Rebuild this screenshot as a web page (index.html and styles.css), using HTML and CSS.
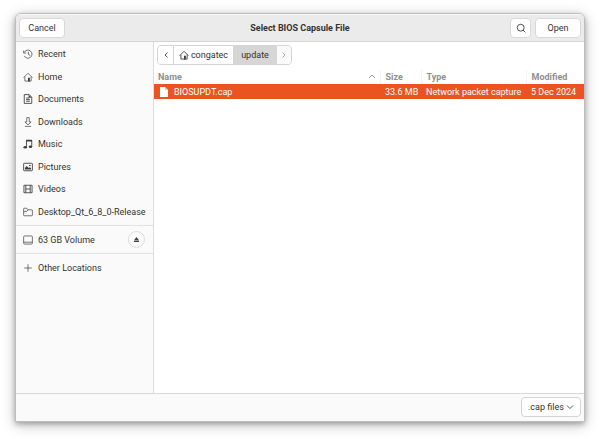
FILE: index.html
```html
<!DOCTYPE html>
<html lang="en">
<head>
    <meta charset="utf-8">
    <title>Select BIOS Capsule File</title>
    <link rel="stylesheet" href="styles.css">
</head>
<body>
    <main class="dialog">
        <header class="header">
            <button type="button" class="btn">Cancel</button>
            <h1>Select BIOS Capsule File</h1>
            <div class="actions">
                <button type="button" class="btn btn-search" aria-label="Search">
                    <svg class="icon" viewBox="0 0 16 16"><circle cx="7.500" cy="7.500" r="5.500"/><path d="M11 11l4 4"/></svg>
                </button>
                <button type="button" class="btn">Open</button>
            </div>
        </header>

        <div class="content">
            <nav class="sidebar" aria-label="Places">
                <ul class="places">
                    <li><a href="#">
                        <svg class="icon thin" viewBox="0 0 16 16"><path d="M2 5.500a6.500 6.500 0 1 1 0 5.500M1 2.500v4h4M8.500 4.500v4l3 2"/></svg>
                        Recent</a></li>
                    <li><a href="#">
                        <svg class="icon thin" viewBox="0 0 16 16"><path d="M1 9l7-7 7 7M3 7.500v7h10v-7"/><path class="solid" d="M8 9h3v6H8z"/></svg>
                        Home</a></li>
                    <li><a href="#">
                        <svg class="icon" viewBox="0 0 16 16"><path d="M2 1h8l4 4v10H2zM5 6.500h5M5 9h6M5 11.500h6"/><path class="solid" d="M9 1l5 5H9z"/></svg>
                        Documents</a></li>
                    <li><a href="#">
                        <svg class="icon thin" viewBox="0 0 16 16"><path d="M6 1h4v7h3l-5 4.500L3 8h3zM3 15h10"/></svg>
                        Downloads</a></li>
                    <li><a href="#">
                        <svg class="icon" viewBox="0 0 16 16"><path d="M5.500 13V2.500h8.500V12"/><path class="solid" d="M5 1h9.500v3H5z"/><ellipse class="solid" cx="3.500" cy="13" rx="2.800" ry="2"/><ellipse class="solid" cx="12" cy="12.500" rx="2.800" ry="2"/></svg>
                        Music</a></li>
                    <li><a href="#">
                        <svg class="icon" viewBox="0 0 16 16"><rect x="1" y="2" width="14" height="12" rx="1"/><path class="solid" d="M3 12V9.500l3-3 3 3 2-1 2 2V12z"/><circle class="solid" cx="11" cy="5.500" r="1.300"/></svg>
                        Pictures</a></li>
                    <li><a href="#">
                        <svg class="icon" viewBox="0 0 16 16"><path d="M1.500 2h13v12h-13zM4.500 2v12M11.500 2v12M4.500 8h7"/></svg>
                        Videos</a></li>
                    <li><a href="#">
                        <svg class="icon thin" viewBox="0 0 16 16"><path d="M1 13V3q0-1 1-1h4l2 2.500h6q1 0 1 1V13q0 1-1 1H2q-1 0-1-1zM1 7h5l2-2.500"/></svg>
                        Desktop_Qt_6_8_0-Release</a></li>
                </ul>
                <div class="volume">
                    <a href="#">
                        <svg class="icon thin" viewBox="0 0 16 16"><rect x="1" y="1.500" width="14" height="13" rx="1.500"/><path d="M1 11.500h14"/></svg>
                        63 GB Volume</a>
                    <button type="button" class="eject" aria-label="Eject">
                        <svg viewBox="0 0 8 8"><path d="M4 0l4 5H0zM0 6h8v2H0z"/></svg>
                    </button>
                </div>
                <a class="other" href="#">
                    <svg class="icon thin" viewBox="0 0 16 16"><path d="M8 2v12M2 8h12"/></svg>
                    Other Locations</a>
            </nav>

            <section class="files">
                <div class="pathbar">
                    <button type="button" class="arrow" aria-label="Back">
                        <svg class="chevron" viewBox="0 0 8 8"><path d="M5.500 1.500L3 4l2.500 2.500"/></svg>
                    </button>
                    <button type="button" class="crumb">
                        <svg class="icon" viewBox="0 0 16 16"><path d="M1 9l7-7 7 7M3 7.500v7h10v-7"/><path class="solid" d="M8 9h3v6H8z"/></svg>
                        congatec
                    </button>
                    <button type="button" class="crumb current">update</button>
                    <button type="button" class="arrow" aria-label="Forward" disabled>
                        <svg class="chevron" viewBox="0 0 8 8"><path d="M2.500 1.500L5 4 2.500 6.500"/></svg>
                    </button>
                </div>
                <table>
                    <thead>
                        <tr>
                            <th class="name"><div class="cell">Name
                                <svg class="chevron" viewBox="0 0 8 8"><path d="M1 5l3-3 3 3"/></svg></div></th>
                            <th class="size">Size</th>
                            <th class="type">Type</th>
                            <th class="modified">Modified</th>
                        </tr>
                    </thead>
                    <tbody>
                        <tr class="selected">
                            <td class="name"><div class="cell">
                                <svg class="file" viewBox="0 0 8 10"><path d="M0 0h5l3 3v7H0z"/><path class="fold" d="M5 0v3h3z"/></svg>
                                BIOSUPDT.cap</div></td>
                            <td class="size">33.6 MB</td>
                            <td>Network packet capture</td>
                            <td>5 Dec 2024</td>
                        </tr>
                    </tbody>
                </table>
            </section>
        </div>

        <footer class="footer">
            <div class="filter">
                <select aria-label="File type">
                    <option>.cap files</option>
                </select>
                <svg class="chevron" viewBox="0 0 8 8"><path d="M1 2.500l3 3 3-3"/></svg>
            </div>
        </footer>
    </main>
</body>
</html>
```
FILE: styles.css
```css
* { box-sizing: border-box; }
body {
    margin: 0;
    min-height: 100vh;
    padding: 13px 15px 17px;
    display: flex;
    background: #fff;
    color: #333;
    font: 9px/12px Roboto, "Noto Sans", sans-serif;
}
button, select { font: inherit; color: inherit; margin: 0; }
a { color: inherit; text-decoration: none; }

.dialog {
    flex: 1;
    min-width: 0;
    display: flex;
    flex-direction: column;
    overflow: hidden;
    background: #fff;
    border: 1px solid #bdbdbd;
    border-radius: 6px 6px 0 0;
    box-shadow: 0 2px 5px rgba(0, 0, 0, 0.25), 0 3px 14px rgba(0, 0, 0, 0.25);
}

.icon {
    width: 10px;
    height: 10px;
    flex: none;
    fill: none;
    stroke: #4a4a4a;
    stroke-width: 1.5;
}
.icon .solid { fill: #3d3d3d; stroke: none; }
.thin { stroke-width: 1.2; }
.chevron {
    width: 8px;
    height: 8px;
    flex: none;
    fill: none;
    stroke: #555;
}

/* title bar */
.header {
    display: grid;
    grid-template-columns: 1fr auto 1fr;
    align-items: center;
    height: 28px;
    padding: 0 3px;
    background: #ebebeb;
    border-top: 1px solid #fafafa;
    border-bottom: 1px solid #d5d5d5;
}
.header h1 { margin: 0; font-size: 9px; font-weight: 700; }
.btn {
    width: 46px;
    height: 20px;
    padding: 0;
    background: #fff;
    border: 1px solid #d8d8d8;
    border-radius: 4px;
}
.btn-search { display: grid; place-items: center; width: 21px; }
.actions { display: flex; justify-content: flex-end; gap: 4px; }

.content { flex: 1; display: flex; min-height: 0; }

/* places */
.sidebar {
    flex: none;
    width: 138px;
    padding-top: 1px;
    background: #fafafa;
    border-right: 1px solid #dcdcdc;
}
.places {
    display: grid;
    grid-auto-rows: 1fr;
    height: 180px;
    margin: 0 0 2px;
    padding: 0;
    list-style: none;
}
.sidebar a {
    display: flex;
    align-items: center;
    gap: 5px;
    height: 100%;
    padding-left: 7px;
    white-space: nowrap;
}
.volume {
    display: flex;
    align-items: center;
    justify-content: space-between;
    height: 29px;
    padding-right: 8px;
    border-top: 1px solid #e2e2e2;
    border-bottom: 1px solid #e2e2e2;
}
.eject {
    display: grid;
    place-items: center;
    width: 17px;
    height: 17px;
    padding: 0;
    background: #fafafa;
    border: 1px solid #ddd;
    border-radius: 50%;
}
.eject svg { width: 5px; height: 5px; fill: #444; }
.sidebar .other { height: 28px; }

/* file list */
.files { flex: 1; min-width: 0; }
.pathbar {
    display: flex;
    width: max-content;
    height: 20px;
    margin: 3px 3px 5px;
    border: 1px solid #d5d5d5;
    border-radius: 4px;
    overflow: hidden;
}
.pathbar button {
    display: flex;
    align-items: center;
    justify-content: center;
    gap: 2px;
    padding: 0;
    background: #fff;
    border: 0;
    border-right: 1px solid #d5d5d5;
}
.pathbar button:last-child { border-right: 0; }
.pathbar .arrow { width: 16px; }
.pathbar .crumb { width: 60px; }
.pathbar .current { width: 43px; background: #d6d6d6; }
.pathbar .arrow:disabled { width: 14px; background: #fafafa; }
.pathbar .arrow:disabled .chevron { stroke: #aaa; }

table { width: 100%; table-layout: fixed; border-collapse: collapse; }
th, td { padding: 0 4px 0 5px; white-space: nowrap; }
th {
    height: 14px;
    color: #909090;
    font-weight: 700;
    text-align: left;
    border-right: 1px solid #f4f4f4;
}
td { height: 15px; }
th:last-child { border-right: 0; }
th .chevron { margin-left: auto; stroke: #999; }
.name { padding-left: 4px; }
.cell { display: flex; align-items: center; }
th.size { width: 41px; }
th.type { width: 105px; }
th.modified { width: 58px; }
td.size { text-align: right; }
.selected { background: #e95420; color: #fff; }
.file { width: 8px; height: 10px; margin: 0 6px 0 2px; fill: #fff; }
.file .fold { fill: #dcc; }

/* filter */
.footer {
    display: flex;
    justify-content: flex-end;
    height: 28px;
    padding: 3px 3px 4px;
    background: #fafafa;
    border-top: 1px solid #d8d8d8;
}
.filter {
    display: flex;
    align-items: center;
    padding-right: 6px;
    background: #fff;
    border: 1px solid #d5d5d5;
    border-radius: 4px;
}
.filter select {
    appearance: none;
    width: 44px;
    height: 18px;
    padding: 0 0 0 6px;
    background: none;
    border: 0;
}
```
